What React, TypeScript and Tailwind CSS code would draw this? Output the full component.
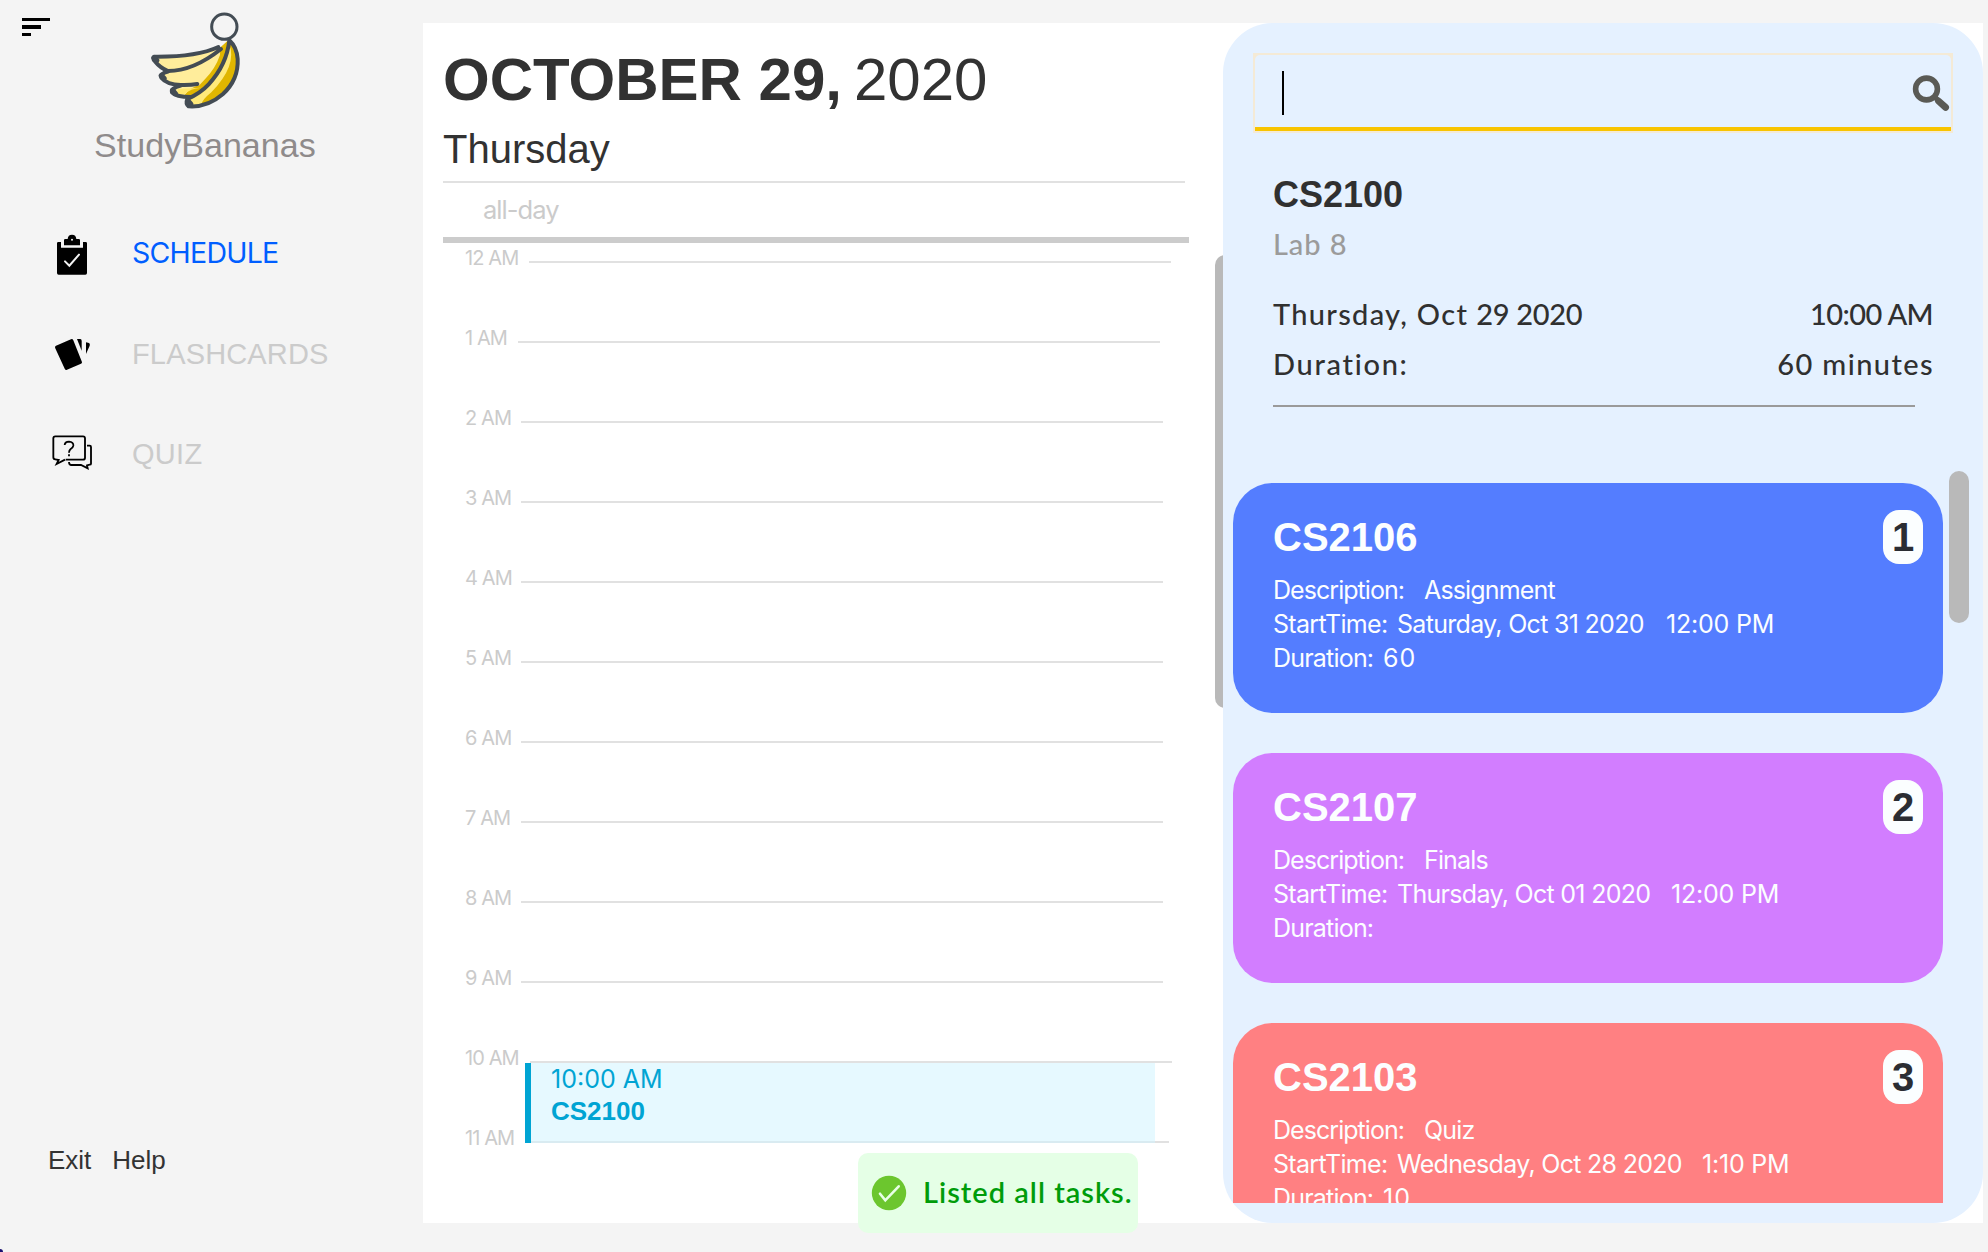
import React from "react";

const hours = [
  { label: "12 AM", width: "w-[64px]" },
  { label: "1 AM", width: "w-[53px]" },
  { label: "2 AM", width: "w-[56px]" },
  { label: "3 AM", width: "w-[56px]" },
  { label: "4 AM", width: "w-[56px]" },
  { label: "5 AM", width: "w-[56px]" },
  { label: "6 AM", width: "w-[56px]" },
  { label: "7 AM", width: "w-[56px]" },
  { label: "8 AM", width: "w-[56px]" },
  { label: "9 AM", width: "w-[56px]" },
  { label: "10 AM", width: "w-[65px]" },
  { label: "11 AM", width: "w-[62px]" },
];

const tasks = [
  { n: 1, code: "CS2106", desc: "Assignment", date: "Saturday, Oct 31 2020", dateW: "w-[269px]", time: "12:00 PM", dur: "60", bg: "bg-[#547dff]" },
  { n: 2, code: "CS2107", desc: "Finals", date: "Thursday, Oct 01 2020", dateW: "w-[274px]", time: "12:00 PM", dur: "", bg: "bg-[#d27dff]" },
  { n: 3, code: "CS2103", desc: "Quiz", date: "Wednesday, Oct 28 2020", dateW: "w-[305px]", time: "1:10 PM", dur: "10", bg: "bg-[#ff8082]" },
];

function BananaLogo() {
  return (
    <svg width="120" height="110" viewBox="0 0 360 330" fill="none" strokeLinecap="round" strokeLinejoin="round">
      <path d="M242 126 Q165 160 42 156 Q48 178 84 200 L64 212 Q76 238 120 241 L97 259 Q104 276 150 279 L185 262 L264 112Z" fill="#ffed9b" />
      <path d="M262 108 L240 128 L240 150 Q226 192 192 226 L178 241 Q152 246 134 270 L165 277 Q250 210 268 108Z" fill="#e0b600" />
      <path d="M114 252 L184 248 Q150 250 134 268 L110 270Z" fill="#ffe76f" />
      <path d="M268 106 Q256 180 206 238 Q180 266 142 285 L144 304 Q200 306 244 272 Q292 234 294 168 Q292 124 268 106Z" fill="#e0b600" />
      <path d="M268 118 Q256 180 206 238 Q180 266 150 285 L148 300 L184 300 Q184 286 214 262 Q292 182 268 118Z" fill="#ffea7a" />
      <g stroke="#434c54" strokeWidth="12">
        <path d="M235 126 Q170 156 46 155 Q34 160 46 170 Q60 188 84 198 Q160 198 243 132" />
        <path d="M84 200 Q58 206 64 218 Q80 238 122 240 Q150 241 172 237" />
        <path d="M122 242 Q92 250 96 262 Q108 276 152 276" />
        <path d="M268 106 Q260 180 206 238 Q182 264 142 282 Q136 296 146 304 Q202 308 248 268 Q296 224 293 162 Q290 126 268 106Z" />
      </g>
      <path d="M42 158 L50 166 M64 212 L72 220 M98 256 L106 266 M144 288 L152 297" stroke="#434c54" strokeWidth="16" />
      <circle cx="253" cy="65" r="38" stroke="#434c54" strokeWidth="9" />
    </svg>
  );
}

function ClipboardIcon() {
  return (
    <svg width="40" height="41" viewBox="156 73 120 123">
      <path d="M171 101 Q171 97 175 97 H183 V114 H249 V97 H257 Q261 97 261 101 V190 Q261 195 256 195 H176 Q171 195 171 190Z" />
      <path d="M192 91 Q192 88 196 88 H203 Q204 75 216 75 Q228 75 229 88 H236 Q240 88 240 91 V107 H192Z" />
      <circle cx="216" cy="90" r="3" fill="#f4f4f4" />
      <path d="M195 155 L208 168 L237 135" stroke="#f4f4f4" strokeWidth="6" strokeLinecap="round" fill="none" />
    </svg>
  );
}

function CardsIcon() {
  return (
    <svg width="40" height="35" viewBox="0 0 120 105" strokeLinejoin="round">
      <path d="M14 31 L59 11 L85 76 L43 94Z" stroke="#000" strokeWidth="10" />
      <path d="M75 6 H85 Q89 6 89 12 V41Z" />
      <path d="M102 16 L111 18 Q115 20 113 26 L102 51Z" />
    </svg>
  );
}

function QuizIcon() {
  return (
    <svg width="40" height="36" viewBox="21 312 120 108" fill="none" stroke="#000" strokeWidth="5.5">
      <path d="M62 389 H114 Q120 389 120 383 V325 Q120 319 114 319 H31 Q25 319 25 325 V382 Q25 388 31 388 L41 390 L35 402 L60 389" />
      <path d="M126 347 H134 Q138 347 138 351 V401 Q138 404 134 404 L126 406 L128 415 L108 405 H78 Q72 404 72 396" />
      <path d="M59 345 Q60 335 72 335 Q86 336 85 347 Q84 353 77 357 Q72 361 72 368 M72 373 V379" />
    </svg>
  );
}

function SearchIcon() {
  return (
    <svg width="38" height="38" viewBox="1912 74 38 38" fill="none" stroke="#5a5a55">
      <circle cx="1926.5" cy="89" r="10.9" strokeWidth="5.6" />
      <path d="M1935 97.5 L1938 100" strokeWidth="5" />
      <path d="M1938.5 101 L1945.6 107.4" strokeWidth="6.8" strokeLinecap="round" />
    </svg>
  );
}

function Sidebar() {
  return (
    <aside className="flex h-full w-[423px] flex-col">
      <div className="flex h-[125px] items-start">
        <div className="mt-[18px] ml-[22px] flex w-7 flex-col gap-1">
          <div className="h-[3px] w-7 bg-black" />
          <div className="h-[4px] w-[19px] bg-black" />
          <div className="h-[3px] w-[9px] bg-black" />
        </div>
        <div className="mt-[5px] ml-[90px]">
          <BananaLogo />
        </div>
      </div>
      <div className="pl-[94px] text-[34px] leading-10 tracking-[0.05px] text-[#8f8b8b]">StudyBananas</div>
      <nav className="mt-[67px] flex flex-col">
        <div className="flex h-[102px] items-start">
          <span className="mt-[2px] ml-[52px] w-[80px]"><ClipboardIcon /></span>
          <span className="font-[Inter] text-[28.5px] leading-[42px] tracking-[-0.75px] text-[#005eff]">SCHEDULE</span>
        </div>
        <div className="flex h-[101px] items-start">
          <span className="mt-[3px] ml-[52px] w-[80px]"><CardsIcon /></span>
          <span className="text-[29px] leading-[41px] tracking-[0.15px] text-[#cbcbcb]">FLASHCARDS</span>
        </div>
        <div className="flex items-start">
          <span className="-mt-px ml-[52px] w-[80px]"><QuizIcon /></span>
          <span className="text-[29px] leading-[39px] tracking-[0.3px] text-[#cbcbcb]">QUIZ</span>
        </div>
      </nav>
      <div className="mt-auto mb-[76px] flex gap-[21px] pl-[48px] text-[26px] leading-8 text-[#333]">
        <span>Exit</span>
        <span>Help</span>
      </div>
    </aside>
  );
}

function Calendar() {
  return (
    <section className="relative flex h-full w-[800px] flex-col overflow-hidden pt-[27px] pl-5">
      <h1 className="flex text-[60px] leading-[60px] text-[#323232]">
        <span className="w-[411px] font-bold whitespace-nowrap">OCTOBER 29,</span>
        <span>2020</span>
      </h1>
      <h2 className="mt-[17px] text-[40px] leading-[44px] text-[#323232]">Thursday</h2>
      <div className="mt-[10px] h-[2px] w-[742px] shrink-0 bg-[#e1e1e1]" />
      <div className="h-[54px] shrink-0 pl-[40px] font-[Inter] text-[25.5px] leading-[54px] tracking-[-0.95px] text-[#cbcbcb]">all-day</div>
      <div className="h-[6px] w-[746px] shrink-0 bg-[#cccccc]" />
      <div className="relative flex flex-col">
        {hours.map((h) => (
          <div key={h.label} className="flex h-20 items-start pl-[22px]">
            <span className={`${h.width} font-[Inter] text-[20px] leading-[30px] tracking-[-0.9px] whitespace-nowrap text-[#cbcbcb]`}>{h.label}</span>
            <div className="mt-[18px] h-[2px] w-[642px] bg-[#e1e1e1]" />
          </div>
        ))}
        <div className="absolute top-[820px] left-[82px] h-20 w-[630px] border-b-2 border-[#d9ebf1] bg-[#e6f9ff]">
          <div className="flex h-20 flex-col border-l-[6px] border-[#00a4d3] pl-[20px] text-[#00a4d3]">
            <span className="font-[Inter] text-[25px] leading-8">10:00 AM</span>
            <span className="text-[26px] leading-[33px] font-bold">CS2100</span>
          </div>
        </div>
      </div>
      <div className="absolute top-[232px] left-[792px] h-[453px] w-5 rounded-[10px] bg-[#b9b9b9]" />
    </section>
  );
}

function TaskCard({ t }: { t: (typeof tasks)[number] }) {
  return (
    <div className={`${t.bg} flex h-[230px] w-[710px] shrink-0 items-start justify-between rounded-[40px] pr-5 pl-10 text-[#fcfeff]`}>
      <div className="flex flex-col pt-[31px] font-[Inter] text-[25px] leading-[34px] tracking-[-0.7px] whitespace-nowrap">
        <span className="mb-3 font-['Liberation_Sans'] text-[40px] leading-[47px] font-bold tracking-normal">{t.code}</span>
        <div className="flex">
          <span className="w-[151px] tracking-[-0.95px]">Description:</span>
          <span className="tracking-[-0.85px]">{t.desc}</span>
        </div>
        <div className="flex">
          <span className="w-[124px]">StartTime:</span>
          <span className={t.dateW}>{t.date}</span>
          <span className="tracking-[-0.2px]">{t.time}</span>
        </div>
        <div className="flex">
          <span className="w-[110px] tracking-[-0.8px]">Duration:</span>
          <span className="tracking-[1px]">{t.dur}</span>
        </div>
      </div>
      <div className="mt-[27px] h-[54px] w-10 rounded-2xl bg-[#fbfeff] text-center text-[40px] leading-[55px] font-bold text-[#2b2d33]">{t.n}</div>
    </div>
  );
}

function TaskPanel() {
  return (
    <section className="relative flex h-full w-[760px] flex-col rounded-[50px] bg-[#e5f1ff] pt-[30px]">
      <div className="ml-[30px] flex h-20 w-[700px] shrink-0 flex-col bg-[#f4ead6] p-[2px]">
        <div className="flex flex-1 items-start justify-between rounded-t-[5px] border-b-4 border-[#f8c400] bg-[#e5f1ff] pt-[16px] pr-px pl-[27px]">
          <div className="h-[44px] w-[2px] bg-black" />
          <div className="mt-[3px]"><SearchIcon /></div>
        </div>
      </div>
      <div className="ml-[50px] flex w-[660px] shrink-0 flex-col text-[#303030]">
        <h3 className="mt-[42px] text-[36px] leading-10 font-bold">CS2100</h3>
        <p className="mt-[9px] font-[Lato] text-[29px] leading-10 font-medium tracking-[0.9px] text-[#9b9b9b]">Lab 8</p>
        <div className="mt-[30px] flex justify-between font-[Lato] text-[29px] leading-10 font-medium">
          <span className="flex gap-[8px]">
            <span className="tracking-[1.3px]">Thursday, Oct</span>
            <span className="tracking-[-0.3px]">29 2020</span>
          </span>
          <span className="tracking-[-0.6px]">10:00 AM</span>
        </div>
        <div className="mt-[10px] flex justify-between font-[Lato] text-[29px] leading-10 font-medium">
          <span className="tracking-[1.7px]">Duration:</span>
          <span className="-mr-px tracking-[1.4px]">60 minutes</span>
        </div>
        <div className="mt-[21px] h-[2px] w-[642px] bg-[#9a9a9a]" />
      </div>
      <div className="mt-[76px] ml-[10px] flex h-[720px] flex-col gap-10 overflow-hidden">
        {tasks.map((t) => (
          <TaskCard key={t.n} t={t} />
        ))}
      </div>
      <div className="absolute top-[448px] left-[726px] h-[152px] w-5 rounded-[10px] bg-[#b9b9b9]" />
    </section>
  );
}

export default function App() {
  return (
    <div className="relative flex h-[1252px] w-[1988px] overflow-hidden bg-[#f4f4f4] font-['Liberation_Sans',sans-serif]">
      <Sidebar />
      <main className="mt-[23px] flex h-[1200px] w-[1560px] bg-white">
        <Calendar />
        <TaskPanel />
      </main>
      <div className="absolute top-[1153px] left-[858px] flex h-20 w-[280px] items-center rounded-[10px] bg-[#e5ffe6] pl-[13px]">
        <svg width="36" height="36" viewBox="0 0 36 36" fill="none">
          <circle cx="18" cy="18" r="17.2" fill="#6cc62e" />
          <path d="M9 18.7 L14.3 25.3 L27.7 11.3" stroke="#e8ffe6" strokeWidth="2.6" strokeLinecap="round" />
        </svg>
        <span className="-mt-[2px] ml-[16px] font-[Lato] text-[29px] font-semibold tracking-[1px] whitespace-nowrap text-[#009c0a]">Listed all tasks.</span>
      </div>
      <div className="absolute bottom-0 left-0 h-[3px] w-[3px] rounded-tr-[3px] bg-[#1a1070]" />
    </div>
  );
}
